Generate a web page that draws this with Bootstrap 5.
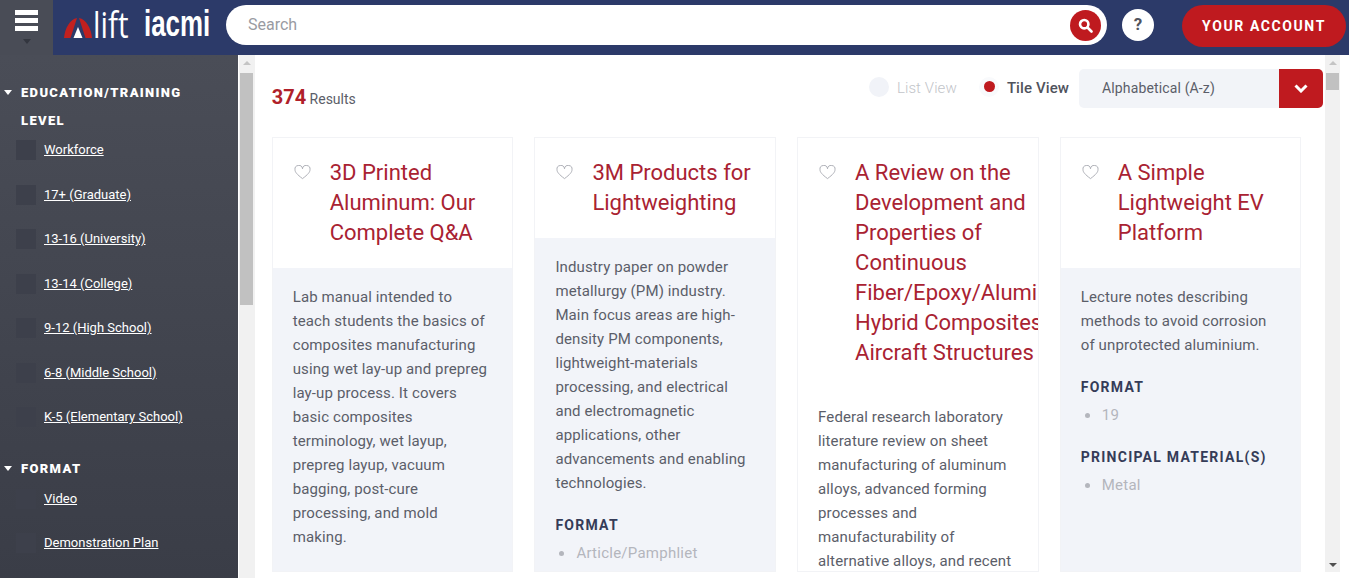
<!DOCTYPE html>
<html lang="en">
<head>
  <meta charset="UTF-8">
  <title>Resource Library</title>
  <link href="https://cdn.jsdelivr.net/npm/bootstrap@5.3.2/dist/css/bootstrap.min.css" rel="stylesheet">
  <style>
    html, body { height: 578px; overflow: hidden; }
    body { font-family: Roboto, "Liberation Sans", sans-serif; background: #fff; color: #5b5e69; }
    .top-bar { height: 55px; background: #2c3a69; }
    .top-bar > div { flex: none; }
    .menu-btn { width: 53px; height: 55px; background: #494c56; flex-direction: column; align-items: center; padding-top: 10px; }
    .menu-btn i { display: block; width: 23px; height: 5px; background: #fff; margin-bottom: 3px; }
    .menu-btn b { display: block; margin-top: 5px; border: 4px solid transparent; border-top: 5px solid #33363f; border-bottom: 0; }
    .brand { width: 173px; padding-left: 11px; color: #fff; line-height: 1; }
    .brand svg { flex: none; }
    .brand-lift { display: inline-block; flex: none; font-family: "Open Sans", sans-serif; font-weight: 400; font-size: 37px; transform: scaleX(.8); transform-origin: left center; margin-left: 1px; margin-top: -9px; width: 51px; }
    .brand-iacmi { display: inline-block; flex: none; font-family: "Liberation Sans", sans-serif; font-weight: 700; font-size: 36px; transform: scaleX(.72); transform-origin: left center; margin-top: -7px; }
    .search-pill { width: 881px; height: 40px; background: #fff; border-radius: 20px; padding: 0 6px 0 22px; font-size: 16px; color: #999ba2; margin-top: 5px; }
    .search-go { width: 31px; height: 31px; border-radius: 50%; background: #bf1a1f; }
    .help-btn { width: 32px; height: 32px; border-radius: 50%; background: #fff; color: #50535d; font-weight: 700; font-size: 17px; margin-left: 15px; margin-top: 9px; }
    .account-btn { width: 164px; height: 42px; border-radius: 21px; background: #bf1a1f; color: #fff; font-weight: 700; font-size: 14px; letter-spacing: 1.6px; margin-left: 28px; margin-top: 5px; }
    .page-body { height: 523px; }
    .side-panel { width: 238px; height: 523px; overflow: hidden; background: linear-gradient(#4a4d57, #3a3d47); padding-top: 24px; color: #fff; flex: none; }
    .side-title { font-weight: 900; font-size: 13px; letter-spacing: 1.35px; line-height: 28px; padding: 0 30px 0 21px; position: relative; margin-bottom: 5px; }
    .side-title::before { content: ""; position: absolute; left: 4px; top: 11px; border: 4.5px solid transparent; border-top: 5.5px solid #fff; border-bottom: 0; }
    .side-title.second-group { margin-top: 3px; margin-bottom: 6px; }
    .side-item { height: 44.5px; display: flex; align-items: flex-start; font-size: 13px; line-height: 20px; padding-left: 16px; }
    .side-check { width: 20px; height: 20px; background: #3d404b; margin-right: 8px; flex: none; }
    .side-item a { color: #fff; }
    .fake-scroll { flex: none; background: #f1f1f1; position: relative; margin-left: 1px; padding-top: 18px; }
    .fake-scroll::before { content: ""; position: absolute; left: 4px; top: 6px; border: 4px solid transparent; border-bottom: 4px solid #c4c4c4; border-top: 0; }
    .thumb { width: 13px; background: #c1c1c1; margin-left: 1px; }
    .side-scroll { width: 16px; }
    .side-thumb { height: 232px; }
    .main-pane { width: 1069px; height: 523px; overflow: hidden; padding: 14px 0 0 16.7px; flex: none; }
    .result-count { font-size: 14px; color: #5b5e69; margin-top: 13px; }
    .result-count strong { font-size: 20px; color: #b01f2a; }
    .view-opt { font-size: 15px; letter-spacing: .1px; margin-right: 22px; margin-bottom: 0; color: #c2c4c9; font-weight: 300; }
    .view-opt.active-view { color: #50535d; font-weight: 500; margin-right: 10px; }
    .view-dot { width: 20px; height: 20px; border-radius: 50%; background: #f1f3f8; margin-right: 8px; margin-top: -3px; position: relative; }
    .active-view .view-dot { background: #f9fafc; }
    .active-view .view-dot::after { content: ""; position: absolute; left: 5px; top: 4px; width: 11px; height: 11px; border-radius: 50%; background: #bf1a1f; }
    .sort-box { width: 244px; height: 39px; background: #f2f4f8; border-radius: 5px; font-size: 14px; letter-spacing: .14px; color: #5b5e69; padding-left: 23px; margin-right: 1px; overflow: hidden; }
    .sort-arrow { width: 44px; height: 39px; background: #bf1a1f; }
    .tile-grid { display: grid; grid-template-columns: repeat(4, 241.5px); column-gap: 21.2px; margin-top: 25px; align-items: start; }
    .tile { height: 435px; border: 1px solid #f2f3f6; overflow: hidden; display: flex; flex-direction: column; background: #fff; }
    .tile-head { padding: 20px 0 20px 21px; display: flex; }
    .tile-head svg { flex: none; margin-top: 7px; margin-right: 19px; }
    .tile-title { font-size: 22px; line-height: 30px; color: #a92232; width: 192px; flex: none; }
    .tile-text { background: #f2f4f9; flex: 1; padding: 17px 20px 0; font-size: 15px; line-height: 24px; color: #5b5e69; }
    .tile-text.plain-body { background: #fff; }
    .tile-text p { margin-bottom: 18px; letter-spacing: .12px; }
    .tile-label { font-size: 14px; font-weight: 700; letter-spacing: 1.25px; color: #353c58; line-height: 24px; margin-bottom: 4px; }
    .tile-vals { list-style: none; padding: 0; margin: 0 0 18px; color: #b4b6bd; letter-spacing: .25px; }
    .tile-vals li { padding-left: 21px; position: relative; }
    .tile-vals li::before { content: ""; position: absolute; left: 4px; top: 10px; width: 5px; height: 5px; border-radius: 50%; background: #b4b6bd; }
    .main-scroll { width: 15px; height: 517px; }
    .main-scroll::after { content: ""; position: absolute; left: 3.5px; bottom: 5px; border: 4px solid transparent; border-top: 4px solid #505050; border-bottom: 0; }
    .main-thumb { height: 17px; }
  </style>
</head>
<body>

<header class="top-bar d-flex">
  <div class="menu-btn d-flex"><i></i><i></i><i></i><b></b></div>
  <div class="brand d-flex align-items-center">
    <svg width="28" height="20" viewBox="0 0 28 20">
      <path d="M0 20C1 10 6 1 13 0L6.500 20z" fill="#c1201f"/>
      <path d="M15 0C22 1 27 10 28 20h-6.500z" fill="#c1201f"/>
      <path d="M14 9l4.500 11h-9z" fill="#fff"/>
    </svg>
    <span class="brand-lift">lift</span><span class="brand-iacmi">iacmi</span>
  </div>
  <div class="search-pill d-flex align-items-center justify-content-between">
    <span>Search</span>
    <span class="search-go d-flex align-items-center justify-content-center">
      <svg width="15" height="15" viewBox="0 0 15 15" fill="none" stroke="#fff" stroke-width="2.600"><circle cx="6.200" cy="6.200" r="4.200"/><path d="M9.500 9.500l4 4" stroke-linecap="round"/></svg>
    </span>
  </div>
  <div class="help-btn d-flex align-items-center justify-content-center">?</div>
  <div class="account-btn d-flex align-items-center justify-content-center">YOUR ACCOUNT</div>
</header>

<div class="page-body d-flex">
  <aside class="side-panel">
    <div class="side-title">EDUCATION/TRAINING LEVEL</div>
    <div class="side-item"><span class="side-check"></span><a href="#">Workforce</a></div>
    <div class="side-item"><span class="side-check"></span><a href="#">17+ (Graduate)</a></div>
    <div class="side-item"><span class="side-check"></span><a href="#">13-16 (University)</a></div>
    <div class="side-item"><span class="side-check"></span><a href="#">13-14 (College)</a></div>
    <div class="side-item"><span class="side-check"></span><a href="#">9-12 (High School)</a></div>
    <div class="side-item"><span class="side-check"></span><a href="#">6-8 (Middle School)</a></div>
    <div class="side-item"><span class="side-check"></span><a href="#">K-5 (Elementary School)</a></div>
    <div class="side-title second-group">FORMAT</div>
    <div class="side-item"><span class="side-check"></span><a href="#">Video</a></div>
    <div class="side-item"><span class="side-check"></span><a href="#">Demonstration Plan</a></div>
  </aside>
  <div class="fake-scroll side-scroll"><div class="thumb side-thumb"></div></div>

  <main class="main-pane">
    <div class="d-flex justify-content-between align-items-start">
      <div class="result-count"><strong>374</strong> Results</div>
      <div class="d-flex align-items-center">
        <label class="view-opt d-flex align-items-center"><span class="view-dot"></span>List View</label>
        <label class="view-opt active-view d-flex align-items-center"><span class="view-dot"></span>Tile View</label>
        <div class="sort-box d-flex align-items-center justify-content-between">
          <span>Alphabetical (A-z)</span>
          <span class="sort-arrow d-flex align-items-center justify-content-center">
            <svg width="14" height="9" viewBox="0 0 14 9" fill="none" stroke="#fff" stroke-width="3"><path d="M1.500 1.500L7 7l5.500-5.500"/></svg>
          </span>
        </div>
      </div>
    </div>

    <div class="tile-grid">
      <article class="tile">
        <div class="tile-head">
          <svg width="17" height="15" viewBox="0 0 18 16" fill="none" stroke="#a9abb2"><path d="M9 14.500C3 10 1 7.500 1 5a3.800 3.800 0 0 1 8-1 3.800 3.800 0 0 1 8 1c0 2.500-2 5-8 9.500z"/></svg>
          <div class="tile-title">3D Printed Aluminum: Our Complete Q&amp;A</div>
        </div>
        <div class="tile-text">
          <p>Lab manual intended to teach students the basics of composites manufacturing using wet lay-up and prepreg lay-up process. It covers basic composites terminology, wet layup, prepreg layup, vacuum bagging, post-cure processing, and mold making.</p>
        </div>
      </article>
      <article class="tile">
        <div class="tile-head">
          <svg width="17" height="15" viewBox="0 0 18 16" fill="none" stroke="#a9abb2"><path d="M9 14.500C3 10 1 7.500 1 5a3.800 3.800 0 0 1 8-1 3.800 3.800 0 0 1 8 1c0 2.500-2 5-8 9.500z"/></svg>
          <div class="tile-title">3M Products for Lightweighting</div>
        </div>
        <div class="tile-text">
          <p>Industry paper on powder metallurgy (PM) industry. Main focus areas are high-density PM components, lightweight-materials processing, and electrical and electromagnetic applications, other advancements and enabling technologies.</p>
          <div class="tile-label">FORMAT</div>
          <ul class="tile-vals"><li>Article/Pamphliet</li></ul>
        </div>
      </article>
      <article class="tile">
        <div class="tile-head">
          <svg width="17" height="15" viewBox="0 0 18 16" fill="none" stroke="#a9abb2"><path d="M9 14.500C3 10 1 7.500 1 5a3.800 3.800 0 0 1 8-1 3.800 3.800 0 0 1 8 1c0 2.500-2 5-8 9.500z"/></svg>
          <div class="tile-title">A Review on the Development and Properties of Continuous Fiber/Epoxy/Aluminum Hybrid Composites Aircraft Structures</div>
        </div>
        <div class="tile-text plain-body">
          <p>Federal research laboratory literature review on sheet manufacturing of aluminum alloys, advanced forming processes and manufacturability of alternative alloys, and recent</p>
        </div>
      </article>
      <article class="tile">
        <div class="tile-head">
          <svg width="17" height="15" viewBox="0 0 18 16" fill="none" stroke="#a9abb2"><path d="M9 14.500C3 10 1 7.500 1 5a3.800 3.800 0 0 1 8-1 3.800 3.800 0 0 1 8 1c0 2.500-2 5-8 9.500z"/></svg>
          <div class="tile-title">A Simple Lightweight EV Platform</div>
        </div>
        <div class="tile-text">
          <p>Lecture notes describing methods to avoid corrosion of unprotected aluminium.</p>
          <div class="tile-label">FORMAT</div>
          <ul class="tile-vals"><li>19</li></ul>
          <div class="tile-label">PRINCIPAL MATERIAL(S)</div>
          <ul class="tile-vals"><li>Metal</li></ul>
        </div>
      </article>
    </div>
  </main>
  <div class="fake-scroll main-scroll"><div class="thumb main-thumb"></div></div>
</div>

<script src="https://cdn.jsdelivr.net/npm/bootstrap@5.3.2/dist/js/bootstrap.bundle.min.js"></script>
</body>
</html>
